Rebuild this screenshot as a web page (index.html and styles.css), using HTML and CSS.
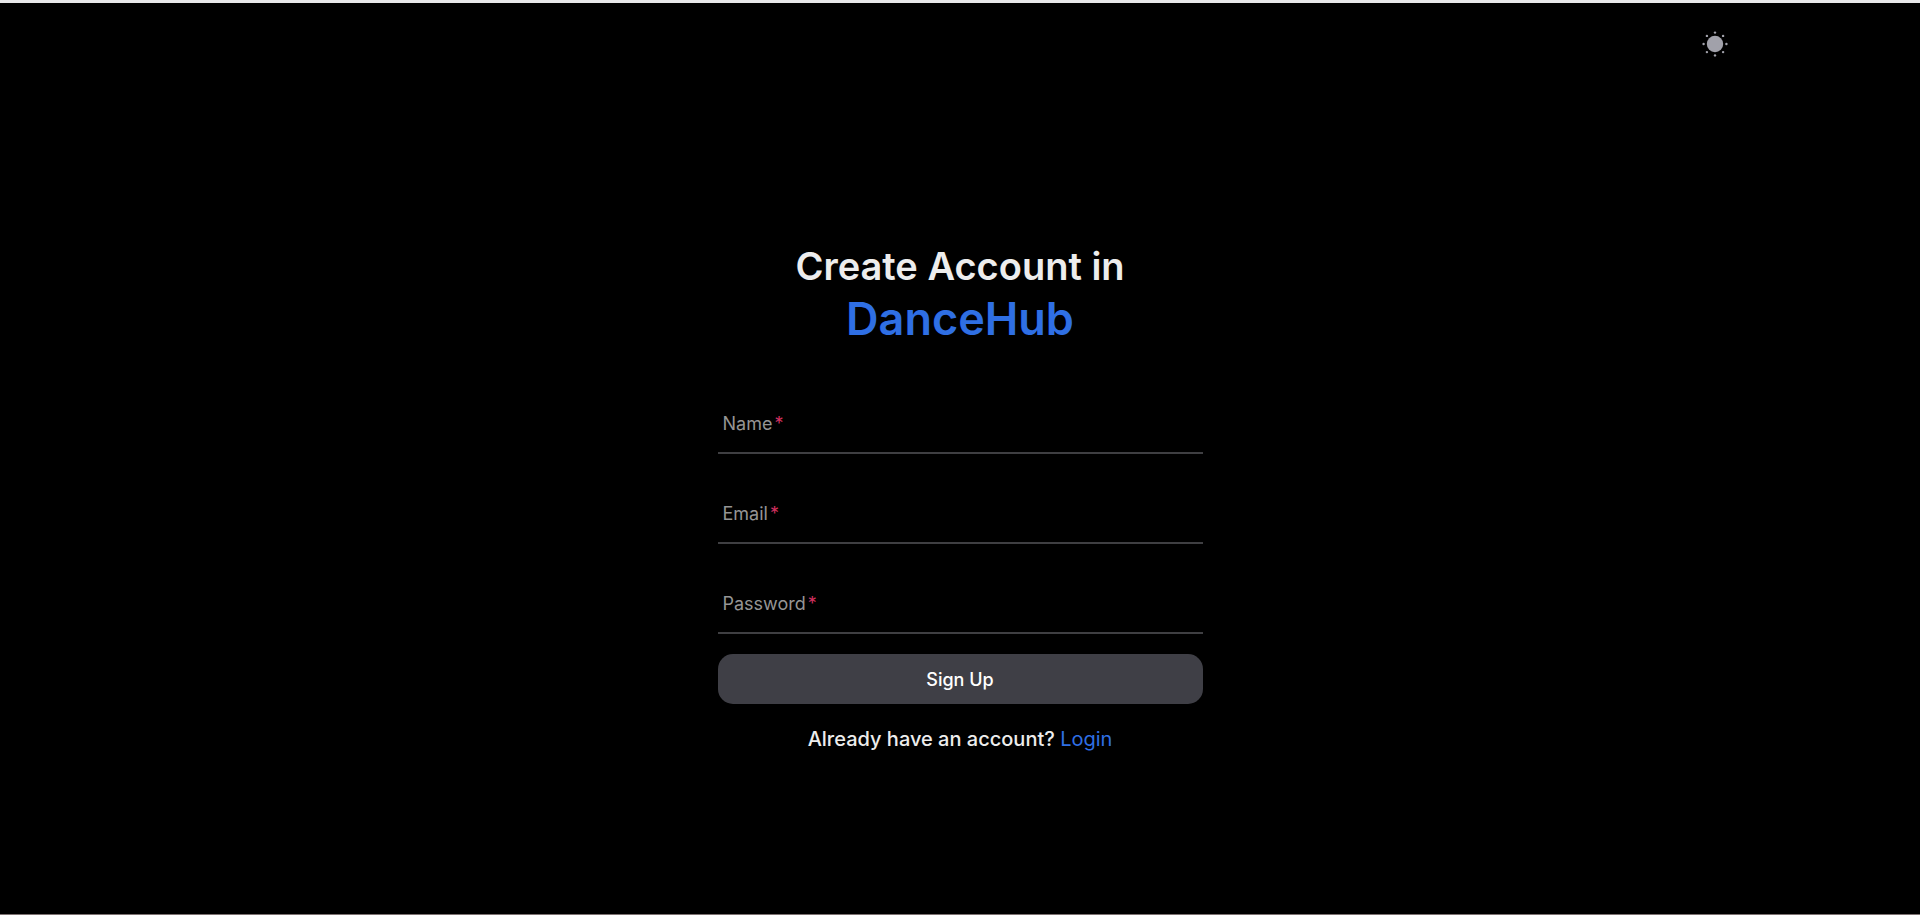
FILE: index.html
```html
<!DOCTYPE html>
<html lang="en">
<head>
<meta charset="utf-8">
<meta name="viewport" content="width=device-width, initial-scale=1">
<title>DanceHub</title>
<link rel="stylesheet" href="styles.css">
</head>
<body class="page">
<header class="topbar">
  <button class="theme" type="button" aria-label="Switch theme">
    <svg viewBox="0 0 26 26" width="26" height="26" fill="currentColor" aria-hidden="true">
      <circle cx="13" cy="13" r="8.2"/>
      <circle cx="13" cy="1.6" r="1.2"/><circle cx="13" cy="24.4" r="1.2"/>
      <circle cx="1.6" cy="13" r="1.2"/><circle cx="24.4" cy="13" r="1.2"/>
      <circle cx="4.9" cy="4.9" r="1.2"/><circle cx="21.1" cy="4.9" r="1.2"/>
      <circle cx="4.9" cy="21.1" r="1.2"/><circle cx="21.1" cy="21.1" r="1.2"/>
    </svg>
  </button>
</header>
<main class="main">
  <h1 class="title">Create Account in <span class="brand">DanceHub</span></h1>
  <form class="form">
    <div class="field"><label class="label" for="name">Name<span class="star">*</span></label><input class="input" id="name" type="text"></div>
    <div class="field"><label class="label" for="email">Email<span class="star">*</span></label><input class="input" id="email" type="email"></div>
    <div class="field"><label class="label" for="password">Password<span class="star">*</span></label><input class="input" id="password" type="password"></div>
    <button class="submit" type="submit">Sign Up</button>
  </form>
  <p class="switch">Already have an account? <a class="link" href="#login">Login</a></p>
</main>
</body>
</html>
```
FILE: styles.css
```css
* { box-sizing: border-box; }
.page {
  margin: 0;
  min-height: 100vh;
  background: #000;
  color: #ededed;
  font-family: Inter, "Liberation Sans", sans-serif;
  border-top: 3px solid #e8e8ea;
  border-bottom: 1px solid #7d7272;
}
.topbar {
  display: flex;
  justify-content: flex-end;
  width: 80%;
  margin: 0 auto;
  padding: 28px 0 0;
}
.theme {
  display: flex;
  padding: 0;
  border: 0;
  background: none;
  color: #a1a1aa;
}
.main {
  width: 100%;
  max-width: 485px;
  margin: 184px auto 0;
}
.title {
  margin: 0 0 37px;
  font-size: 38px;
  line-height: 50px;
  font-weight: 600;
  text-align: center;
}
.brand {
  display: block;
  color: #2f6fe4;
  font-size: 45px;
  line-height: 56px;
}
.form { display: flex; flex-direction: column; }
.field {
  display: grid;
  height: 70px;
  margin-bottom: 20px;
  border-bottom: 2px solid #3f3f42;
}
.label, .input { grid-area: 1 / 1; }
.label {
  align-self: center;
  padding: 12px 5px 0;
  font-size: 18px;
  line-height: 24px;
  color: #959595;
}
.star { margin-left: 2px; color: #d0305f; }
.input {
  width: 100%;
  padding: 12px 5px 0;
  border: 0;
  outline: 0;
  background: none;
  color: inherit;
  font: inherit;
}
.submit {
  height: 50px;
  border: 0;
  border-radius: 15px;
  background: #3f3f46;
  color: #fff;
  font-family: inherit;
  font-size: 18px;
  font-weight: 500;
}
.switch {
  margin: 20px 0 0;
  font-size: 20px;
  line-height: 30px;
  font-weight: 500;
  text-align: center;
}
.link { color: #2f6fe4; font-weight: 400; text-decoration: none; }
```
